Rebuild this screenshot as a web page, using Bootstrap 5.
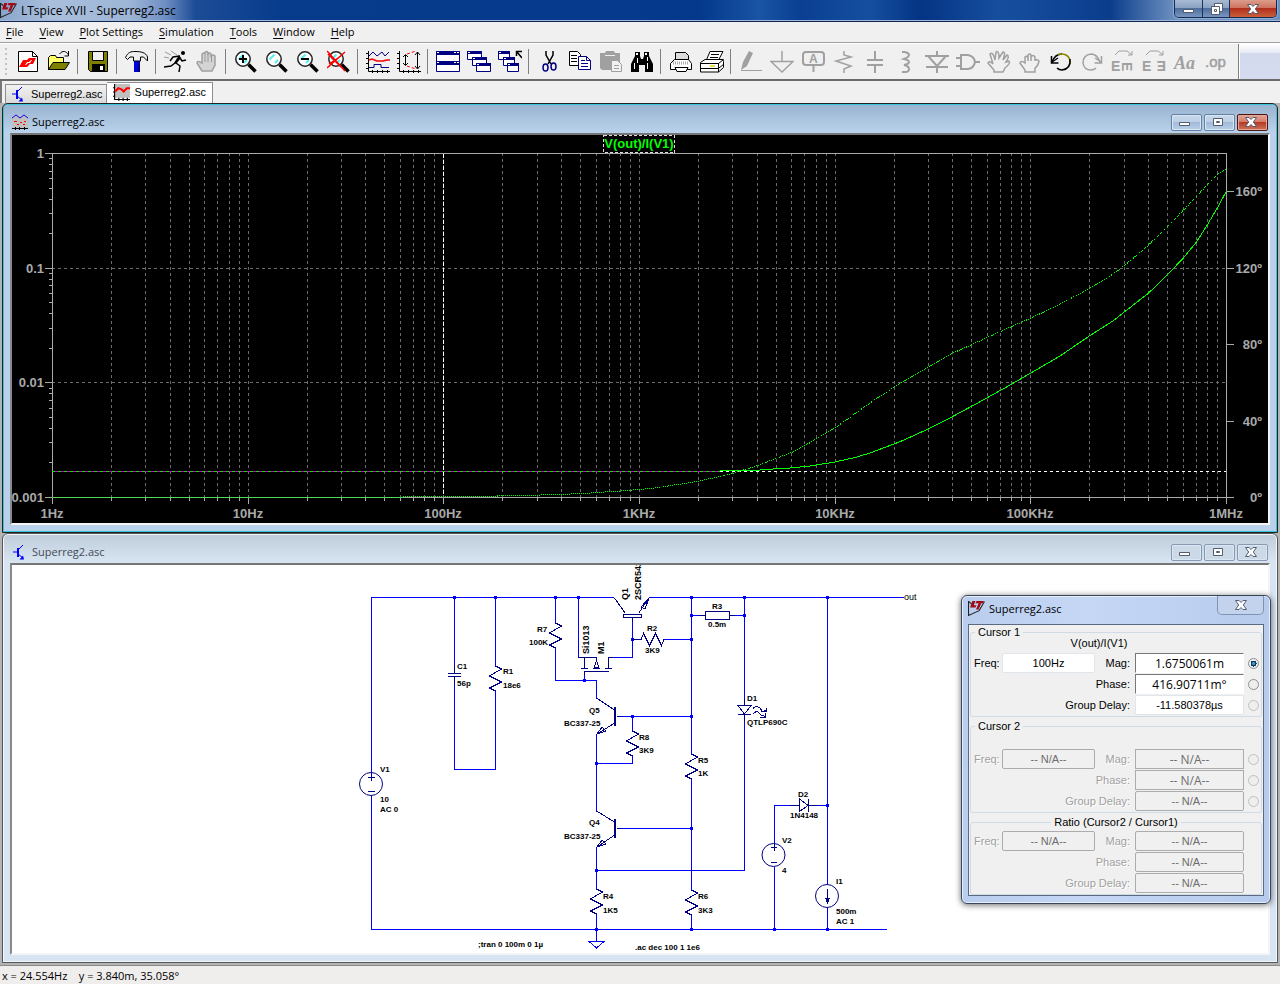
<!DOCTYPE html>
<html lang="en">
<head>
<meta charset="utf-8">
<meta name="viewport" content="width=device-width, initial-scale=1">
<title>LTspice XVII - Superreg2.asc</title>
<link href="https://cdn.jsdelivr.net/npm/bootstrap@5.3.0/dist/css/bootstrap.min.css" rel="stylesheet">
<style>
body{font-family:"Open Sans","Noto Sans",sans-serif;font-size:11px;line-height:16px;color:#000;background:#f0f0f0;min-height:100vh}
.btn{--bs-btn-border-radius:0;--bs-btn-padding-x:0;--bs-btn-padding-y:0;--bs-btn-font-size:11px;--bs-btn-line-height:1;--bs-btn-disabled-opacity:1}
svg{display:block;flex:none}
svg text{font-family:"Liberation Sans",Arial,sans-serif}
.app-title{height:22px;font-size:12px;background:linear-gradient(90deg,#8aa5cc 0,#a9bfdc 50px,#9db5d6 130px,#6f8fc4 165px,#1d4c96 195px,#073c8c 280px,#04398c 700px,#1a54a4 760px,#0a3f92 800px,#164f9f 870px,#043484 920px,#174f9e 1000px,#0b3d8d 1110px,#6d90bf 1175px);border-bottom:1px solid #102550;box-shadow:inset 0 -1px #9fb7d8}
.app-name{padding-top:2px}
.app-btns{height:18px;border:1px solid #132a52;border-top:0;border-radius:0 0 5px 5px;overflow:hidden;box-shadow:0 0 0 1px #8facd4;margin-right:3px}
.app-btns .btn{height:17px;border:0;border-right:1px solid #1b335c;background:linear-gradient(#a9bbd3,#8ba2c2 45%,#4e6e9d 50%,#7896c0)}
.app-btns .btn:last-child{border-right:0;background:linear-gradient(#dd9c8c,#ce7461 45%,#b0301c 50%,#cc5e38)}
.w-min{width:28px}.w-mx{width:27px}.w-cl{width:46px}
.menus{height:21px;border-bottom:1px solid #a0a0a0;padding-left:6px;gap:16px}
.menus a{color:#000;text-decoration:none}
.menus u{text-underline-offset:2px}
.tools{height:38px;border-top:1px solid #fff;border-bottom:2px solid #6a6a6a}
.tools .btn{width:31px;height:35px;border:0}
.grip{width:2px;height:28px;margin:0 5px;background:repeating-linear-gradient(#c2c2c2 0 2px,transparent 2px 5px)}
.bar-sep{width:8px;flex:none}
.bar-sep::before{content:"";display:block;width:1px;height:25px;margin-left:3px;background:#808080}
.bar-end{border-left:1px solid #808080;margin-left:7px;box-shadow:inset 1px 0 #fff;background:linear-gradient(#fff,#e6eaf4 25%,#d2d9ec 26%,#d5dcef)}
.doc-tabs{height:22px;padding-left:3px;font-family:"Liberation Sans",Arial,sans-serif;border-left:2px solid #777}
.doc-tabs .nav-link{border:1px solid #8c8e94;border-bottom:0;border-radius:0;color:#000;padding:0 3px 0 5px;gap:4px;height:19px;background:linear-gradient(#f2f2f2,#dadada)}
.doc-tabs .nav-link.active{background:#fff;height:21px;padding:0 6px 2px 6px;gap:5px;border-left:0}
.mdi{background:#b4b4b4;padding:0 2px 2px}
.mdi-win{border:1px solid #222;border-radius:6px 6px 0 0;box-shadow:inset 0 0 0 1px #35c4dc,inset 0 1px #fff;padding:1px 7px 7px;background:linear-gradient(#98b3d0,#b9d1ea 28px,#b9d1ea)}
.mdi-win.idle{border-color:#555;box-shadow:inset 0 0 0 1px #f4f8fc;background:linear-gradient(#bfcddb,#d7e4f2 28px,#d7e4f2);color:#444b55}
.mdi-cap{height:28px;padding:6px 2px 0}
.mdi-cap svg:first-child{margin-right:4px}
.cap-set{gap:2px}
.cap-btn.btn{width:31px;height:17px;border:1px solid #6480a2;border-radius:2px;background:linear-gradient(#c8d9ec,#bccfe4 48%,#a3bbd6 50%,#b8d0ea);box-shadow:inset 0 0 0 1px #d9e6f4}
.cap-btn.shut{border-color:#4c1414;background:linear-gradient(#e2a696,#d27a68 48%,#b53a24 50%,#d07456);box-shadow:inset 0 0 0 1px #e4a898}
.idle .cap-btn.btn{border-color:#8a99b0;background:#ccd9e7}
.client{border:2px solid;border-color:#767676 #f4f4f4 #f4f4f4 #8a8a8a;background:#fff}
.plot{background:#000}
.client svg{width:100%;height:auto}
.dlg{position:absolute;right:9px;top:492px;width:310px;border:1px solid #39465a;border-radius:6px;background:linear-gradient(90deg,#b9cdee,#c6d7f5 40%,#b6cbed);box-shadow:0 1px 6px rgba(0,0,0,.6),inset 0 0 0 1px #e6effc;padding:0 6px 7px}
.dlg-cap{height:28px}
.dlg-x.btn{width:47px;height:19px;border:1px solid #8093b4;border-top:0;border-radius:0 0 5px 5px;background:#c3d3ee}
.dlg-body{font-family:"Liberation Sans",Arial,sans-serif;border:1px solid #5a6a80;background:#f0f0f0;padding:1px 1px 0}
.dlg-body fieldset{border:1px solid #d0dbe6;border-radius:3px;margin-bottom:3px}
.dlg-body legend{float:none;width:auto;font-size:11px;line-height:12px;margin:0 0 0 4px;padding:0 3px}
.readout{display:grid;grid-template-columns:31px 93px 1fr 109px 17px;grid-auto-rows:20px;row-gap:1px;align-items:center;padding-bottom:1px}
.readout label{padding-left:3px}
.readout label.far{grid-column:3;text-align:right;padding:0 5px 0 0}
.readout label.wide{grid-column:2/4}
.readout input[type=text]{width:100%;height:20px;border:1px solid #e1e5ec;border-radius:2px;background:#fff;text-align:center;padding:0;color:#000}
.readout input.pick{border-color:#777 #fff #fff #777;border-radius:0;font-family:"Open Sans","Noto Sans",sans-serif;font-size:12px}
.readout input[type=radio]{width:11px;height:11px;margin:0 0 0 4px}
.off label{color:#a0a0a0;text-shadow:1px 1px #fff}
.off .readout input[type=text]{background:#f0f0f0;color:#6d6d6d;border-color:#acacac}
.dlg .form-check-input{border-color:#8e8f8f;background-color:#eee}
.dlg .form-check-input:checked{background-color:#eee;background-image:radial-gradient(circle,#3aa0d0 0 1px,#123c5c 2px 3px,transparent 3px)}
.gap-v1{margin-bottom:4px;padding-right:34px}.gap-v2{padding-top:17px}.gap-v3{padding-top:3px}
.stat{background:#f0eded;border-top:1px solid #8a8a8a;padding:2px 2px 0;white-space:pre}
.grid-line{stroke:#6c6c6c;stroke-dasharray:3 3;fill:none}
.axis{stroke:#aaa;fill:none}
.plot text{fill:#a9a9a9;font-weight:700;font-size:13px}
.wire{stroke:#00f;fill:none}
.part{stroke:#000084;fill:none}
.sch text{font-weight:700;font-size:8px;fill:#000}
.sch .turned{font-size:9px}
.sch .net{font-size:9px;font-weight:400}
.g{stroke:#a0a0a0;fill:none;stroke-width:2}
</style>
</head>
<body class="d-flex flex-column">
<svg width="0" height="0" class="position-absolute" aria-hidden="true">
  <symbol id="lt" viewBox="0 0 16 16"><path d="M.5 1v13.5l10-4.5L15.500 1.500M1 1.500l3 3" fill="none" stroke="#222"/><path d="M4 1h3L5.500 5H8l-1 2H2zM8 1h7l-1 2h-1.500L10 9H7.500L10 3H7z" fill="#a00c14"/></symbol>
  <symbol id="npn" viewBox="0 0 16 16"><path d="M1 8h4M11 1 6 6M6 10l5 4" fill="none" stroke="#00f"/><path d="M5 4h2v9H5zM12 15.500H7.500L11 11.500z" fill="#00f"/></symbol>
  <symbol id="wave" viewBox="0 0 16 16"><path d="M1 0h15v13H1z" fill="#c0c0c0"/><path d="M1.500 0v14.500H16M0 3.500h2M0 7.500h2M0 11.500h2M5.500 13v3M9.500 13v3M13.500 13v3" stroke="#000" fill="none"/><path d="M2 7l3-3 3 1 2 2 3-3h3" stroke="#f00" stroke-width="2" fill="none"/></symbol>
  <symbol id="wave2" viewBox="0 0 16 16"><path d="M0 1h16v13H0z" fill="#c0c0c0"/><path d="M0 4l4-3 4 3 4-3 4 3" stroke="#00f" fill="none"/><path d="M2 7h3v1H2zM8 8h2v1H8zM12 7h2v1h-2zM5 10h2v1H5zM11 10h2v1h-2z" fill="#f00"/><path d="M0 14.500h16M3.500 13v3M7.500 13v3M12.500 13v3" stroke="#000" fill="none"/></symbol>
  <symbol id="c-min" viewBox="0 0 14 10"><path d="M1.500 5.500h10v3h-10z" fill="#fff" stroke="#555c70"/></symbol>
  <symbol id="c-max" viewBox="0 0 14 10"><path d="M2.500 1.500h9v7h-9z" fill="#fff" stroke="#555c70"/><path d="M5.500 4.500h3v1h-3z" fill="none" stroke="#555c70"/></symbol>
  <symbol id="c-res" viewBox="0 0 14 12"><path d="M5.500.5h8v8h-8z" fill="#fff" stroke="#555c70"/><path d="M2.500 3.500h8v8h-8z" fill="#fff" stroke="#555c70"/><path d="M5.500 6.500h2v2h-2z" fill="none" stroke="#555c70"/></symbol>
  <symbol id="c-x" viewBox="0 0 14 10"><path d="M1.500.5h3.500L7 2.500 9 .5h3.500L9.300 5l3.200 4.500H9L7 7.500 5 9.500H1.500L4.700 5z" fill="#fff" stroke="#555c70"/></symbol>
  <symbol id="glass" viewBox="0 0 24 24"><circle cx="9" cy="9" r="7.200" fill="#fff" stroke="#222" stroke-width="1.500"/><path d="M4.500 9.500l5-5M10 13l3-3" stroke="#5ee" stroke-width="2"/><path d="M14.500 14.500l7 7" stroke="#000" stroke-width="3.500"/></symbol>
</svg>

<header class="app-title d-flex justify-content-between align-items-start">
  <div class="app-name d-flex align-items-center gap-1"><svg width="17" height="17"><use href="#lt"/></svg><span>LTspice XVII - Superreg2.asc</span></div>
  <div class="app-btns d-flex">
    <button class="btn w-min d-flex align-items-center justify-content-center" aria-label="Minimize"><svg width="14" height="10"><use href="#c-min"/></svg></button>
    <button class="btn w-mx d-flex align-items-center justify-content-center" aria-label="Restore"><svg width="14" height="12"><use href="#c-res"/></svg></button>
    <button class="btn w-cl d-flex align-items-center justify-content-center" aria-label="Close"><svg width="14" height="10"><use href="#c-x"/></svg></button>
  </div>
</header>

<nav class="menus d-flex align-items-center text-nowrap">
  <a href="#"><u>F</u>ile</a><a href="#"><u>V</u>iew</a><a href="#"><u>P</u>lot Settings</a><a href="#"><u>S</u>imulation</a><a href="#"><u>T</u>ools</a><a href="#"><u>W</u>indow</a><a href="#"><u>H</u>elp</a>
</nav>

<div class="tools d-flex overflow-hidden" role="toolbar" aria-label="Main">
  <div class="d-flex align-items-center">
  <span class="grip"></span>
  <button class="btn d-flex align-items-center justify-content-center" aria-label="New"><svg width="24" height="24"><path d="M2.500 1.500h14l5 5v15h-19z" fill="#fff" stroke="#000"/><path d="M16.500 1.500v5h5" fill="none" stroke="#000"/><path fill-rule="evenodd" d="M3 17l4-7h4l2-2h7l-3 6h-3l-3 3zM9 15l2-3h2l2-2h1l-2 3h-2l-2 2z" fill="#f00"/></svg></button>
  <button class="btn d-flex align-items-center justify-content-center" aria-label="Open"><svg width="24" height="24"><path d="M1.500 20V7.500l2-2h5l1 2h7V12" fill="#ff6" stroke="#000"/><path d="M1.500 19.500 6 12.500h16.500l-4.500 7z" fill="#808000" stroke="#000"/><path d="M12.500 4c3-4 7-3 9 1m0-4v5h-4" fill="none" stroke="#000"/></svg></button>
  <span class="bar-sep"></span>
  <button class="btn d-flex align-items-center justify-content-center" aria-label="Save"><svg width="24" height="24"><path d="M2.500 1.500h19v20h-17l-2-2z" fill="#808000" stroke="#000"/><path d="M6.500 1.500h11v9h-11z" fill="#f0f0f0" stroke="#000"/><path d="M6 14h13v7H6z" fill="#000"/><path d="M14 16h3v4h-3z" fill="#fff"/></svg></button>
  <span class="bar-sep"></span>
  <button class="btn d-flex align-items-center justify-content-center" aria-label="Control panel"><svg width="24" height="24"><path d="M9 10h6v12H9z" fill="#0000e0"/><path d="M14 11h1v11h-3z" fill="#000080"/><path d="M.5 7.500C3 2 6 1.500 10 1.500c6 0 11 1 12.500 5.500v4l-4-4h-3v4h-7v-4H5L2.500 9.500z" fill="#eee" stroke="#000"/></svg></button>
  <span class="bar-sep"></span>
  <button class="btn d-flex align-items-center justify-content-center" aria-label="Run"><svg width="24" height="24"><path d="M1 2l6 3M0 7l5 1M7 1l6 4" stroke="#999"/><circle cx="19" cy="3" r="2"/><path d="M16 6 9 7l-3 4M16 8l2 3 4-1M12 13l4 3-1 6M11 13l-4 3-7 1" fill="none" stroke="#000" stroke-width="1.500"/><path d="M15 5l2 3-5 6-2-1z"/></svg></button>
  <button class="btn d-flex align-items-center justify-content-center" disabled aria-label="Halt"><svg width="24" height="24"><path d="M7 21 2 13q0-3 5 0V4q2-2 3 0V2.500q2-2 3 0V4q2-2 3 0v2q2-2 4 0v9l-3 6z" fill="#d4d4d4" stroke="#a0a0a0" stroke-width="1.500"/><path d="M10 4v8M13 4v8M16.500 5v7" stroke="#999"/></svg></button>
  <span class="bar-sep"></span>
  <button class="btn d-flex align-items-center justify-content-center" aria-label="Zoom in"><svg width="24" height="24"><use href="#glass"/><path d="M5 9h8M9 5v8" stroke="#000" stroke-width="2"/></svg></button>
  <button class="btn d-flex align-items-center justify-content-center" aria-label="Pan"><svg width="24" height="24"><use href="#glass"/></svg></button>
  <button class="btn d-flex align-items-center justify-content-center" aria-label="Zoom out"><svg width="24" height="24"><use href="#glass"/><path d="M5 9h8" stroke="#000" stroke-width="2"/></svg></button>
  <button class="btn d-flex align-items-center justify-content-center" aria-label="Zoom full extents"><svg width="24" height="24"><use href="#glass"/><path d="M0 1l18 20M18 2 0 18M1 4l13 13M2 14l12-8" stroke="#f00" stroke-width="1.500"/></svg></button>
  <span class="bar-sep"></span>
  <button class="btn d-flex align-items-center justify-content-center" aria-label="Autorange"><svg width="24" height="24" fill="none"><path d="M2.500 1v20.500H24M0 3.500h2M0 8.500h2M0 13.500h2M0 18.500h2M6.500 20v3M11.500 20v3M16.500 20v3M21.500 20v3" stroke="#000"/><path d="M3 6l4-4 4 4 5-4 3 4 4-4M3 17.500h5v-3h7v3h8" stroke="#000080"/><path d="M3 10l3-1 5 2h6l4-1h3" stroke="#f00" stroke-width="1.500"/></svg></button>
  <button class="btn d-flex align-items-center justify-content-center" aria-label="Fit vertically"><svg width="24" height="24" fill="none"><path d="M2.500 1v20.500H24M0 3.500h2M0 8.500h2M0 13.500h2M0 18.500h2M6.500 20v3M11.500 20v3M16.500 20v3M21.500 20v3M8.500 5v10M6 7l2.500-2.500L11 7M6 13l2.500 2.500L11 13M20.500 2v16M18 5l2.500-3L23 5M18 16l2.500 3 2.500-3" stroke="#000"/><path d="M10 4l9-3M10 16l9 3" stroke="#f00" stroke-dasharray="3 2"/></svg></button>
  <span class="bar-sep"></span>
  <button class="btn d-flex align-items-center justify-content-center" aria-label="Tile windows"><svg width="24" height="24"><path d="M.5 1.500h23v10H.5zM.5 11.500h23v10H.5z" fill="#fff" stroke="#000080"/><path d="M0 1h24v4H0zM0 11h24v4H0z" fill="#000080"/><path d="M1 2h2v1H1zM18 2h2v1h-2zM21 2h2v1h-2zM1 12h2v1H1zM18 12h2v1h-2zM21 12h2v1h-2z" fill="#fff"/></svg></button>
  <button class="btn d-flex align-items-center justify-content-center" aria-label="Cascade windows"><svg width="24" height="24"><path d="M.5 1.500h14v8H.5z M5.500 7.500h14v8h-14zM9.500 13.500h14v8h-14z" fill="#fff" stroke="#000080"/><path d="M0 1h15v3H0zM5 7h15v3H5zM9 13h15v3H9z" fill="#000080"/><path d="M1 2h2v1H1zM6 8h2v1H6zM10 14h2v1h-2z" fill="#fff"/></svg></button>
  <button class="btn d-flex align-items-center justify-content-center" aria-label="Close all windows"><svg width="24" height="24"><path d="M.5 1.500h11v8H.5z M5.500 7.500h11v8h-11zM9.500 13.500h11v8h-11z" fill="#fff" stroke="#000080"/><path d="M0 1h12v3H0zM5 7h12v3H5zM9 13h12v3H9z" fill="#000080"/><path d="M1 2h2v1H1zM6 8h2v1H6zM10 14h2v1h-2z" fill="#fff"/><path d="M18.500 6V1.500H24M19 2l5 6" fill="none" stroke="#000" stroke-width="1.500"/></svg></button>
  <span class="bar-sep"></span>
  <button class="btn d-flex align-items-center justify-content-center" aria-label="Cut"><svg width="24" height="24" fill="none"><path d="M9 1v4l5 9M16 1v4l-5 9" stroke="#000" stroke-width="1.500"/><ellipse cx="8.500" cy="17.500" rx="2.500" ry="3.500" stroke="#000080" stroke-width="1.500"/><ellipse cx="16.500" cy="16.500" rx="2.500" ry="3.500" stroke="#000080" stroke-width="1.500"/></svg></button>
  <button class="btn d-flex align-items-center justify-content-center" aria-label="Copy"><svg width="24" height="24"><path d="M1.500 1.500h8l3 3v11h-11z" fill="#fff" stroke="#000"/><path d="M3 5.500h6M3 8.500h6M3 11.500h6" stroke="#000"/><path d="M10.500 6.500h8l4 4v9h-12z" fill="#fff" stroke="#000080"/><path d="M18.500 6.500v4h4M13 10.500h4M13 13.500h7M13 16.500h7" fill="none" stroke="#000080"/></svg></button>
  <button class="btn d-flex align-items-center justify-content-center" disabled aria-label="Paste"><svg width="24" height="24"><path d="M1 3h5l1-2h8l1 2h5v17H3l-2-2z" fill="#a0a0a0"/><path d="M6 5.500h10" stroke="#eee"/><path d="M12.500 10.500h6l4 4v7h-10z" fill="#f0f0f0" stroke="#a0a0a0"/><path d="M15 15.500h5M15 18.500h5" stroke="#a0a0a0"/></svg></button>
  <button class="btn d-flex align-items-center justify-content-center" aria-label="Find"><svg width="24" height="24"><path d="M5 2h5v4l1 3h2l1-3V2h5v4l4 8v8h-8v-7H9v7H1v-8l4-8z"/><path d="M6 3h2v2H6zM15 3h2v2h-2zM4 13h1v6H4zM17 13h1v6h-1zM7 8h1v5H7zM17 7h1v4h-1z" fill="#fff"/></svg></button>
  <span class="bar-sep"></span>
  <button class="btn d-flex align-items-center justify-content-center" aria-label="Print"><svg width="24" height="24"><path d="M6.500 11V2.500h10l3 3V11" fill="#ddd" stroke="#000"/><path d="M1.500 19.500v-6l4-4h14l3 4v6z" fill="#fff" stroke="#000"/><path d="M4 13h16" stroke="#aaa" stroke-width="3" stroke-dasharray="1 1"/><path d="M6 17.500h13l-2 4H8z" fill="#fff" stroke="#000"/></svg></button>
  <button class="btn d-flex align-items-center justify-content-center" aria-label="Print setup"><svg width="24" height="24"><path d="M6 11 10 1.500h13L18 11z" fill="#fff" stroke="#000"/><path d="M11 4.500h8M10 7.500h8" stroke="#000"/><path d="M.5 12.500 5 9.500h18l.5 2v6l-5 4.500H.500z" fill="#fff" stroke="#000"/><path d="M0 13.500h18.500l5-4M18.500 13v9M1 18.500h17M19 18l5-4" stroke="#000" fill="none"/><path d="M10 16h5" stroke="#dd0" stroke-width="1.500"/></svg></button>
  <span class="bar-sep"></span>
  <button class="btn d-flex align-items-center justify-content-center" disabled aria-label="Wire"><svg width="24" height="24"><path d="M2 20 4 12 10 1l4 2-6 13z" fill="#a0a0a0"/><path d="M2 20.500h21" stroke="#a0a0a0"/></svg></button>
  <button class="btn d-flex align-items-center justify-content-center" disabled aria-label="Ground"><svg width="24" height="24"><path class="g" style="stroke-width:1.500" d="M12 1v10M1 11.500h22L12 22z"/></svg></button>
  <button class="btn d-flex align-items-center justify-content-center" disabled aria-label="Label net"><svg width="24" height="24"><rect class="g" x="2" y="2" width="21" height="13" rx="3"/><path class="g" d="M12.500 15v7"/><text x="8" y="13" font-size="12" font-weight="700" fill="#a0a0a0">A</text></svg></button>
  <button class="btn d-flex align-items-center justify-content-center" disabled aria-label="Resistor"><svg width="24" height="24"><path class="g" style="stroke-width:1.500" d="M12 1v4l7 2L4 11l15 5-7 3v4"/></svg></button>
  <button class="btn d-flex align-items-center justify-content-center" disabled aria-label="Capacitor"><svg width="24" height="24"><path class="g" d="M12 1v8M4 10h16M4 15h16M12 15v8"/></svg></button>
  <button class="btn d-flex align-items-center justify-content-center" disabled aria-label="Inductor"><svg width="24" height="24"><path class="g" d="M8 2h3q4 1 4 3t-5 4q5 1 5 3t-5 3q5 1 5 4t-4 3H8"/></svg></button>
  <button class="btn d-flex align-items-center justify-content-center" disabled aria-label="Diode"><svg width="24" height="24"><path class="g" d="M12 1v4M0 6h24M3 6l9 10 9-10M1 17h22M12 17v6"/></svg></button>
  <button class="btn d-flex align-items-center justify-content-center" disabled aria-label="Component"><svg width="24" height="24"><path class="g" d="M0 8h5M0 16h5M5 5h7q6 1 7 7-1 6-7 7H5zM19 12h5"/></svg></button>
  <button class="btn d-flex align-items-center justify-content-center" disabled aria-label="Move"><svg width="24" height="24"><path class="g" style="stroke-width:1.500" d="M7 22V20L1 13q1-3 5 1L3 4q3-3 5 6L9 2q3-2 3 6l4-6q3 0 0 8l4-5q3 1-1 7l3-1q2 2-4 7l-2 4z"/></svg></button>
  <button class="btn d-flex align-items-center justify-content-center" disabled aria-label="Drag"><svg width="24" height="24"><path class="g" style="stroke-width:1.500" d="M7 22V20L2 13q1-3 5 0V7q2-2 3 1V5q2-2 3 0v2q2-3 4 0v3q3-1 4 1-1 5-4 7v4zM10 8v3M13 6v5M17 8v3"/></svg></button>
  <button class="btn d-flex align-items-center justify-content-center" aria-label="Undo"><svg width="24" height="24" fill="none"><path d="M3 12Q6 4 13 4" stroke="#000" stroke-width="1.500"/><path d="M9 5q4-2 8 0 5 3 4 9" stroke="#880" stroke-width="1.500"/><path d="M21 9q1 10-8 11-3 0-5-2" stroke="#000" stroke-width="1.500"/><path d="M2.500 6v7h7M3 12l6-4" stroke="#000" stroke-width="1.500"/></svg></button>
  <button class="btn d-flex align-items-center justify-content-center" disabled aria-label="Redo"><svg width="24" height="24"><path class="g" style="stroke-width:1.500" d="M20 12Q17 4 11 4 3 5 3 13q1 7 8 7 3 0 5-2M21.500 6v7h-7M21 12l-6-4"/></svg></button>
  <button class="btn d-flex align-items-center justify-content-center" disabled aria-label="Rotate"><svg width="24" height="24"><path class="g" style="stroke-width:1" d="M4 5l4-4h8l5 4m0-4v4h-4"/><text x="0" y="21" font-size="14" font-weight="700" fill="#a0a0a0">E</text><text transform="translate(11 12) rotate(90)" font-size="14" font-weight="700" fill="#a0a0a0">E</text></svg></button>
  <button class="btn d-flex align-items-center justify-content-center" disabled aria-label="Mirror"><svg width="24" height="24"><path class="g" style="stroke-width:1" d="M4 5l4-4h8l5 4m0-4v4h-4"/><text x="0" y="21" font-size="14" font-weight="700" fill="#a0a0a0">E</text><text transform="translate(24 11) rotate(180)" font-size="14" font-weight="700" fill="#a0a0a0">E</text></svg></button>
  <button class="btn d-flex align-items-center justify-content-center" disabled aria-label="Text"><svg width="24" height="24"><text x="1" y="19" font-size="18" font-weight="700" font-style="italic" fill="#a0a0a0" style="font-family:'Liberation Serif',serif">Aa</text></svg></button>
  <button class="btn d-flex align-items-center justify-content-center" disabled aria-label="SPICE directive"><svg width="24" height="24"><text x="1" y="17" font-size="15" fill="#a0a0a0" stroke="#a0a0a0" stroke-width=".5">.op</text></svg></button>
  </div>
  <div class="bar-end flex-grow-1"></div>
</div>

<nav class="doc-tabs nav flex-nowrap align-items-end">
  <a class="nav-link d-flex align-items-center" href="#"><svg width="16" height="16"><use href="#npn"/></svg>Superreg2.asc</a>
  <a class="nav-link active d-flex align-items-center" href="#"><svg width="17" height="17"><use href="#wave"/></svg>Superreg2.asc</a>
</nav>

<main class="mdi position-relative">
  <section class="mdi-win">
    <div class="mdi-cap d-flex align-items-center">
      <svg width="16" height="16"><use href="#wave2"/></svg><span class="me-auto">Superreg2.asc</span>
      <div class="cap-set d-flex">
        <button class="btn cap-btn d-flex align-items-center justify-content-center" aria-label="Minimize"><svg width="14" height="10"><use href="#c-min"/></svg></button>
        <button class="btn cap-btn d-flex align-items-center justify-content-center" aria-label="Maximize"><svg width="14" height="10"><use href="#c-max"/></svg></button>
        <button class="btn cap-btn shut d-flex align-items-center justify-content-center" aria-label="Close"><svg width="14" height="10"><use href="#c-x"/></svg></button>
      </div>
    </div>
    <div class="client plot">
      <svg viewBox="12 135 1256 388" role="img" aria-label="V(out)/I(V1) magnitude and phase">
        <g shape-rendering="crispEdges">
          <path id="grid" class="grid-line"/>
          <path class="grid-line" d="M52 268.500H1226M52 382.500H1226"/>
          <path id="ticks" class="axis"/>
          <path class="axis" d="M45 153.500H1226.500V504M52.500 153V504M45 497.500H1234M45 268.500h8M45 382.500h8M1226 191.500h8M1226 268.500h8M1226 344.500h8M1226 421.500h8"/>
          <path d="M443.500 154V497" stroke="#fff" stroke-dasharray="4 2"/>
          <path d="M720 471.500H1226" stroke="#fff" stroke-dasharray="3 3"/>
          <path d="M52 471.500H720" stroke="#c0c"/><path d="M52 471.500H720" stroke="#0e0" stroke-dasharray="3 3"/>
          <path d="M403 496.500H443" stroke="#0f0" stroke-dasharray="1 1"/>
          <path d="M52 497.500H403" stroke="#0f0" stroke-dasharray="1 1"/>
          <path fill="none" stroke="#0f0" d="M720 470.500H753L773 469 790 468 810 466 835 462 855 457.500 870 453 900 441.700 928.300 429 952.300 416.700 971.700 406.300 987.300 397.700 1011.300 384.300 1030.300 373.300 1060 356 1089.300 336 1113.300 320.700 1124.300 312 1148.300 293.300 1167.300 275 1183.300 258 1196.300 242.300 1207.300 225 1217.300 208 1226.300 191.300"/>
          <path fill="none" stroke="#0f0" stroke-dasharray="1 1" d="M443 496.500H495L500 495.500 540 495 570 494 590 493 620 491 653 488.300 698 481.300 732 473.700 757 465.700 792 452.300 810 442.700 835 428 870 403 900 383.300 928.300 367 952.300 353.300 971.700 344.700 987.300 337.300 1011.300 326.700 1030.300 318.300 1060 304.300 1089.300 288.300 1113.300 274 1124.300 265.700 1148.300 245.300 1167.300 226.700 1183.300 210.300 1196.300 196.700 1207.300 184.700 1217.300 174.700 1226.300 168.700"/>
          <rect x="603.500" y="135.500" width="71" height="17" fill="none" stroke="#ddd" stroke-dasharray="3 2"/>
        </g>
        <text x="639" y="148" text-anchor="middle" style="fill:#0f0">V(out)/I(V1)</text>
        <g text-anchor="end"><text x="44" y="158">1</text><text x="44" y="273">0.1</text><text x="44" y="387">0.01</text><text x="44" y="502">0.001</text>
        <text x="1262" y="196">160º</text><text x="1262" y="273">120º</text><text x="1262" y="349">80º</text><text x="1262" y="426">40º</text><text x="1262" y="502">0º</text></g>
        <g text-anchor="middle"><text x="52" y="518">1Hz</text><text x="248" y="518">10Hz</text><text x="443" y="518">100Hz</text><text x="639" y="518">1KHz</text><text x="835" y="518">10KHz</text><text x="1030" y="518">100KHz</text><text x="1226" y="518">1MHz</text></g>
      </svg>
    </div>
  </section>

  <section class="mdi-win idle">
    <div class="mdi-cap d-flex align-items-center">
      <svg width="16" height="16"><use href="#npn"/></svg><span class="me-auto">Superreg2.asc</span>
      <div class="cap-set d-flex">
        <button class="btn cap-btn d-flex align-items-center justify-content-center" aria-label="Minimize"><svg width="14" height="10"><use href="#c-min"/></svg></button>
        <button class="btn cap-btn d-flex align-items-center justify-content-center" aria-label="Maximize"><svg width="14" height="10"><use href="#c-max"/></svg></button>
        <button class="btn cap-btn d-flex align-items-center justify-content-center" aria-label="Close"><svg width="14" height="10"><use href="#c-x"/></svg></button>
      </div>
    </div>
    <div class="client sch">
      <svg viewBox="12 565 1256 388" role="img" aria-label="Superreg2 schematic">
        <g shape-rendering="crispEdges">
          <path class="wire" d="M371.500 772V597.500H614M649 597.500H904M371.500 796V929.500H887M454.500 597V666M454.500 684V769.500H495.500V690M495.500 597V666M555.500 597V623M555.500 648V680.500H596.500V698M578.500 597V657.500M632.500 622V657.500H613M664 639.500H691M691.500 597V754M691.500 779V890M691.500 915V930M691 615.500H699M735 615.500H744.500M744.500 597V699M744.500 722V870.500H596M596.500 734V811M596.500 847V889M596.500 914V941M584.500 675V680M621 716.500H691M632.500 716V731M632.500 756V763.500H596M621 828.500H691M774.500 843V805.500H790M774.500 867V930M817 805.500H827M827.500 597V884M827.500 908V930"/>
          <path d="M589 941.500H604L596.500 948Z" fill="none" stroke="#00f"/>
          <path id="joints" fill="#00f"/>
          <g class="part">
            <path d="M614.500 598 625.500 613.500M638.500 613.500 649 598M649 598 641 607 645 609ZM623 614.500H641V617.500H623ZM632.500 618V622M632 639.500H641"/>
            <path d="M454.500 666V673M448 673.500H461M448 676.500H461M454.500 677V684"/>
            <path id="zigs"/>
            <path d="M641 639.500 643.500 633.500 649.500 645.500 655.500 633.500 661.500 645.500 664 639.500M699 615.500H705M729 615.500H735M705 611.500H729V619.500H705Z"/>
            <path d="M578 657.500H596.500V660L594.500 667H598.500L596.500 660M584.500 657V668M581 668.500H588M593 668.500H600M605 668.500H612M608.500 668V657.500H613M584 671.500H609M584.500 671V675"/>
            <path d="M596.500 698 614.500 710M614 723.500 597 734 602 727 606 731 597 734M617 716.500H621"/>
            <path d="M596.500 811 614.500 822M614 835.500 597 847 602 840 606 844 597 847M617 828.500H621"/>
            <path d="M615 707V726M615 819V838" stroke-width="2"/>
            <path d="M744.500 699V705M738 705.500H751L744.500 714ZM738 714.500H751M744.500 714V722M753 708.500L756 706 760 708 763 712 766 710M753 714 757 711 761 715 765 716.500M761 711.500H766V708M760 717.500H765V713"/>
            <path d="M790 805.500H799M799.500 799V811.500L808 805.500ZM808.500 799V812M809 805.500H817"/>
            <path d="M371.500 773V781M368 777.500H375M368 791.500H375M774.500 843V851M771 847.500H777M771 862.500H777M827.500 889V903M825.500 898H829.500L827.500 903Z"/>
          </g>
        </g>
        <g class="part"><circle cx="371" cy="784" r="11.500"/><circle cx="773.500" cy="855" r="11.500"/><circle cx="827" cy="896" r="11.500"/></g>
        <text x="537" y="632">R7</text><text x="529" y="645">100K</text><text x="457" y="669">C1</text><text x="457" y="686">56p</text><text x="503" y="674">R1</text><text x="503" y="688">18e6</text>
        <text x="380" y="772">V1</text><text x="380" y="802">10</text><text x="380" y="812">AC 0</text>
        <text x="589" y="713">Q5</text><text x="564" y="726">BC337-25</text><text x="639" y="740">R8</text><text x="639" y="753">3K9</text>
        <text x="647" y="631">R2</text><text x="645" y="653">3K9</text><text x="712" y="609">R3</text><text x="708" y="627">0.5m</text>
        <text x="747" y="701">D1</text><text x="747" y="725">QTLP690C</text><text x="698" y="763">R5</text><text x="698" y="776">1K</text>
        <text x="589" y="825">Q4</text><text x="564" y="839">BC337-25</text><text x="603" y="899">R4</text><text x="603" y="913">1K5</text><text x="698" y="899">R6</text><text x="698" y="913">3K3</text>
        <text x="798" y="797">D2</text><text x="790" y="818">1N4148</text><text x="782" y="843">V2</text><text x="782" y="873">4</text><text x="836" y="884">I1</text><text x="836" y="914">500m</text><text x="836" y="924">AC 1</text>
        <text x="478" y="947">;tran 0 100m 0 1µ</text><text x="635" y="950">.ac dec 100 1 1e6</text><text class="net" x="904" y="600">out</text>
        <text class="turned" transform="translate(628 600) rotate(-90)">Q1</text><text class="turned" transform="translate(641 600) rotate(-90)">2SCR542</text><text class="turned" transform="translate(589 654) rotate(-90)">Si1013</text><text class="turned" transform="translate(604 654) rotate(-90)">M1</text>
      </svg>
    </div>
  </section>

  <section class="dlg" role="dialog" aria-label="Cursor readout">
    <div class="dlg-cap d-flex align-items-start">
      <div class="d-flex align-items-center gap-1 pt-1 me-auto"><svg width="17" height="17"><use href="#lt"/></svg><span>Superreg2.asc</span></div>
      <button class="btn dlg-x d-flex align-items-center justify-content-center" aria-label="Close"><svg width="14" height="10"><use href="#c-x"/></svg></button>
    </div>
    <div class="dlg-body">
      <fieldset>
        <legend>Cursor 1</legend>
        <div class="text-center lh-1 gap-v1">V(out)/I(V1)</div>
        <div class="readout">
          <label for="f1">Freq:</label><input type="text" id="f1" value="100Hz" readonly>
          <label class="far" for="m1">Mag:</label><input type="text" class="pick" id="m1" value="1.6750061m" readonly><input class="form-check-input" type="radio" name="c1" aria-label="Mag" checked>
          <label class="far" for="p1">Phase:</label><input type="text" class="pick" id="p1" value="416.90711m°" readonly><input class="form-check-input" type="radio" name="c1" aria-label="Phase">
          <label class="far wide" for="g1">Group Delay:</label><input type="text" id="g1" value="-11.580378µs" readonly><input class="form-check-input" type="radio" name="c1" aria-label="Group Delay" disabled>
        </div>
      </fieldset>
      <fieldset class="off">
        <legend>Cursor 2</legend>
        <div class="readout gap-v2">
          <label for="f2">Freq:</label><input type="text" id="f2" value="-- N/A--" disabled>
          <label class="far" for="m2">Mag:</label><input type="text" class="pick" id="m2" value="-- N/A--" disabled><input class="form-check-input" type="radio" name="c2" aria-label="Mag" disabled>
          <label class="far" for="p2">Phase:</label><input type="text" class="pick" id="p2" value="-- N/A--" disabled><input class="form-check-input" type="radio" name="c2" aria-label="Phase" disabled>
          <label class="far wide" for="g2">Group Delay:</label><input type="text" id="g2" value="-- N/A--" disabled><input class="form-check-input" type="radio" name="c2" aria-label="Group Delay" disabled>
        </div>
      </fieldset>
      <fieldset class="off mb-0">
        <legend class="mx-auto">Ratio (Cursor2 / Cursor1)</legend>
        <div class="readout gap-v3">
          <label for="f3">Freq:</label><input type="text" id="f3" value="-- N/A--" disabled>
          <label class="far" for="m3">Mag:</label><input type="text" id="m3" value="-- N/A--" disabled><span></span>
          <label class="far" for="p3">Phase:</label><input type="text" id="p3" value="-- N/A--" disabled><span></span>
          <label class="far wide" for="g3">Group Delay:</label><input type="text" id="g3" value="-- N/A--" disabled><span></span>
        </div>
      </fieldset>
    </div>
  </section>
</main>

<footer class="stat flex-grow-1">x = 24.554Hz    y = 3.840m, 35.058°</footer>

<script src="https://cdn.jsdelivr.net/npm/bootstrap@5.3.0/dist/js/bootstrap.bundle.min.js"></script>
<script>
// Log grid: six decades of frequency, three decades of magnitude.
const x0 = 52, x1 = 1226, y0 = 153, y1 = 497;
let grid = '', ticks = '';
for (let d = 0; d < 6; d++) for (let k = 1; k < 10; k++) {
  const x = Math.round(x0 + (x1 - x0) * (d + Math.log10(k)) / 6) + .5;
  if (d || k > 1) {
    grid += `M${x} ${y0}V${y1}`;
    ticks += `M${x} ${y1}v${k === 1 ? 7 : 4}`;
  }
}
for (let d = 0; d < 3; d++) for (let k = 2; k < 10; k++) {
  const y = Math.round(y1 - (y1 - y0) * (d + Math.log10(k)) / 3) + .5;
  ticks += `M${x0} ${y}h-3`;
}
document.getElementById('grid').setAttribute('d', grid);
document.getElementById('ticks').setAttribute('d', ticks);
// Wire junctions and vertical resistors of the schematic.
const joints = [[454,597],[495,597],[555,597],[578,597],[691,597],[744,597],[827,597],[691,615],[744,615],[632,639],[691,639],[584,680],[632,716],[691,716],[596,763],[691,828],[596,870],[596,929],[691,929],[774,929],[827,929],[827,805]];
document.getElementById('joints').setAttribute('d', joints.map(([x, y]) => `M${x - 1} ${y - 1}h3v3h-3z`).join(''));
const resistors = [[495,666],[555,623],[632,731],[691,754],[596,889],[691,890]];
document.getElementById('zigs').setAttribute('d', resistors.map(([x, y]) => `M${x + .5} ${y}l6 3-12 7 12 6-12 6 6 3`).join(''));
</script>
</body>
</html>
